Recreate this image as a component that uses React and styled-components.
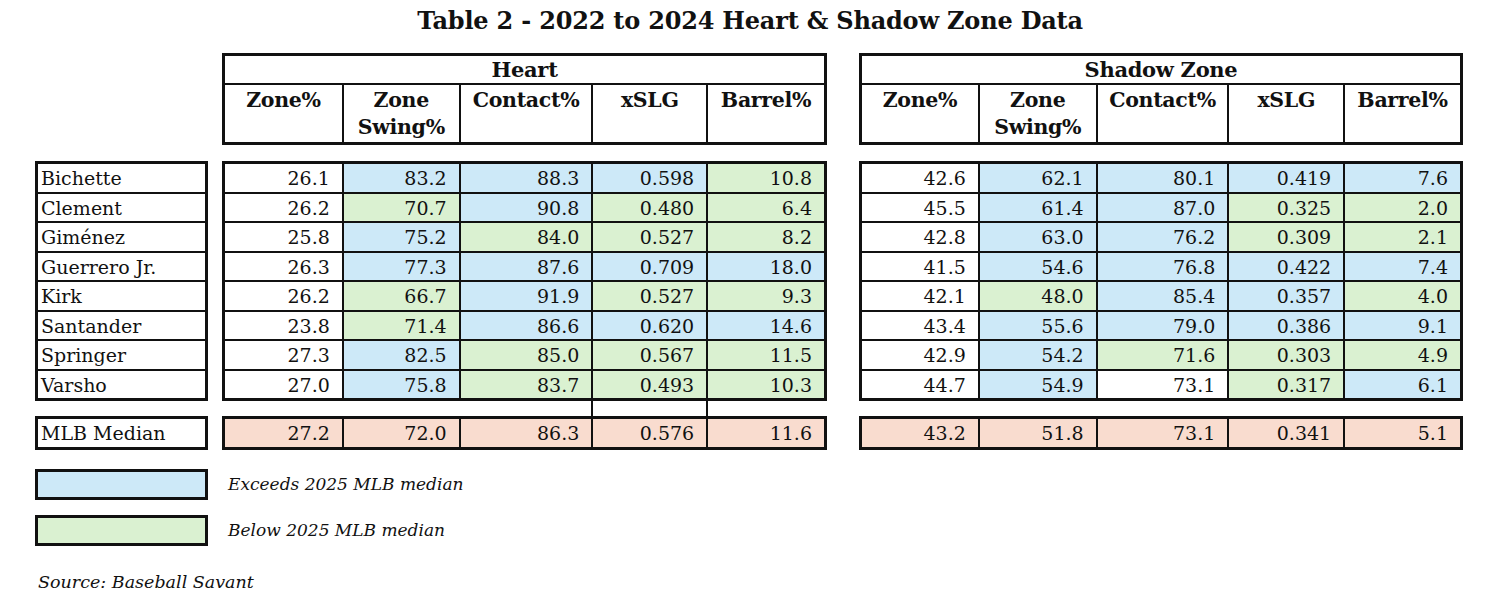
import React from "react";
import styled, { createGlobalStyle } from "styled-components";

const Global = createGlobalStyle`
  html, body { margin: 0; padding: 0; background: #fff; }
  body { font-family: "DejaVu Serif", "Liberation Serif", serif; color: #111; }
`;

const FILL = { W: "#ffffff", B: "#cde9f8", G: "#daf1d1", P: "#f9dccf" };

const Page = styled.div`
  width: 1500px;
  height: 605px;
  box-sizing: border-box;
  padding: 4px 0 0 35px;
  position: relative;
`;

const Title = styled.h1`
  margin: 0 0 0 -35px;
  width: 1500px;
  text-align: center;
  font-size: 24px;
  line-height: 34px;
  font-weight: bold;
  letter-spacing: -0.2px;
`;

const Main = styled.div`
  display: flex;
  align-items: flex-start;
  margin-top: 15px;
`;

const NameColumn = styled.div`
  width: 173px;
  margin-top: 108px;
  margin-right: 14px;
  display: flex;
  flex-direction: column;
`;

const Block = styled.div`
  width: ${(p) => p.$w}px;
  margin-right: ${(p) => p.$mr || 0}px;
  display: flex;
  flex-direction: column;
`;

const Grid = styled.div`
  display: grid;
  grid-template-columns: ${(p) => p.$cols};
  box-sizing: border-box;
  width: 100%;
  border: 3px solid #111;
  margin-top: ${(p) => p.$mt || 0}px;
`;

const GroupHead = styled.div`
  grid-column: 1 / -1;
  height: 27px;
  line-height: 27px;
  text-align: center;
  font-weight: bold;
  font-size: 21px;
  letter-spacing: -0.3px;
  border-bottom: 2px solid #111;
`;

const ColHead = styled.div`
  height: 57px;
  padding-top: 2px;
  box-sizing: border-box;
  text-align: center;
  font-weight: bold;
  font-size: 20.5px;
  line-height: 27px;
  letter-spacing: -0.3px;
  white-space: nowrap;
  border-left: ${(p) => (p.$first ? "none" : "2px solid #111")};
`;

const Cell = styled.div`
  height: 27.5px;
  line-height: 29px;
  font-size: 19px;
  text-align: right;
  padding-right: 12px;
  background: ${(p) => FILL[p.$fill] || "#fff"};
  border-left: ${(p) => (p.$first ? "none" : "2px solid #111")};
  border-top: ${(p) => (p.$top ? "none" : "2px solid #111")};
  overflow: hidden;
  white-space: nowrap;
`;

const NameCell = styled.div`
  height: 27.5px;
  line-height: 29px;
  font-size: 19px;
  padding-left: 3px;
  border-top: ${(p) => (p.$top ? "none" : "2px solid #111")};
  white-space: nowrap;
`;

const NameBox = styled.div`
  border: 3px solid #111;
  margin-top: ${(p) => p.$mt || 0}px;
`;

const GapRow = styled.div`
  display: grid;
  grid-template-columns: ${(p) => p.$cols};
  height: 15px;
  padding: 0 3px;
`;

const GapCell = styled.div`
  border-left: ${(p) => (p.$line ? "2px solid #111" : "none")};
`;

const Legend = styled.div`
  margin-top: 19px;
  display: flex;
  flex-direction: column;
  gap: 15px;
`;

const LegendRow = styled.div`
  display: flex;
  align-items: center;
  gap: 20px;
`;

const Swatch = styled.div`
  width: 173px;
  height: 31px;
  box-sizing: border-box;
  border: 3px solid #111;
  background: ${(p) => FILL[p.$fill]};
`;

const Note = styled.span`
  font-style: italic;
  font-size: 17px;
`;

const Source = styled.div`
  margin-top: 26px;
  margin-left: 3px;
  font-style: italic;
  font-size: 17.5px;
`;

const HEADS = [["Zone%"], ["Zone", "Swing%"], ["Contact%"], ["xSLG"], ["Barrel%"]];

const players = [
  "Bichette",
  "Clement",
  "Giménez",
  "Guerrero Jr.",
  "Kirk",
  "Santander",
  "Springer",
  "Varsho",
];

const heart = [
  [["26.1", "W"], ["83.2", "B"], ["88.3", "B"], ["0.598", "B"], ["10.8", "G"]],
  [["26.2", "W"], ["70.7", "G"], ["90.8", "B"], ["0.480", "G"], ["6.4", "G"]],
  [["25.8", "W"], ["75.2", "B"], ["84.0", "G"], ["0.527", "G"], ["8.2", "G"]],
  [["26.3", "W"], ["77.3", "B"], ["87.6", "B"], ["0.709", "B"], ["18.0", "B"]],
  [["26.2", "W"], ["66.7", "G"], ["91.9", "B"], ["0.527", "G"], ["9.3", "G"]],
  [["23.8", "W"], ["71.4", "G"], ["86.6", "B"], ["0.620", "B"], ["14.6", "B"]],
  [["27.3", "W"], ["82.5", "B"], ["85.0", "G"], ["0.567", "G"], ["11.5", "G"]],
  [["27.0", "W"], ["75.8", "B"], ["83.7", "G"], ["0.493", "G"], ["10.3", "G"]],
];
const heartMedian = ["27.2", "72.0", "86.3", "0.576", "11.6"];

const shadow = [
  [["42.6", "W"], ["62.1", "B"], ["80.1", "B"], ["0.419", "B"], ["7.6", "B"]],
  [["45.5", "W"], ["61.4", "B"], ["87.0", "B"], ["0.325", "G"], ["2.0", "G"]],
  [["42.8", "W"], ["63.0", "B"], ["76.2", "B"], ["0.309", "G"], ["2.1", "G"]],
  [["41.5", "W"], ["54.6", "B"], ["76.8", "B"], ["0.422", "B"], ["7.4", "B"]],
  [["42.1", "W"], ["48.0", "G"], ["85.4", "B"], ["0.357", "B"], ["4.0", "G"]],
  [["43.4", "W"], ["55.6", "B"], ["79.0", "B"], ["0.386", "B"], ["9.1", "B"]],
  [["42.9", "W"], ["54.2", "B"], ["71.6", "G"], ["0.303", "G"], ["4.9", "G"]],
  [["44.7", "W"], ["54.9", "B"], ["73.1", "W"], ["0.317", "G"], ["6.1", "B"]],
];
const shadowMedian = ["43.2", "51.8", "73.1", "0.341", "5.1"];

function ZoneBlock({ title, cols, width, mr, rows, median, gapLines }) {
  return (
    <Block $w={width} $mr={mr}>
      <Grid $cols={cols}>
        <GroupHead>{title}</GroupHead>
        {HEADS.map((h, i) => (
          <ColHead key={i} $first={i === 0}>
            {h.map((line) => (
              <div key={line}>{line}</div>
            ))}
          </ColHead>
        ))}
      </Grid>
      <Grid $cols={cols} $mt={16}>
        {rows.map((r, ri) =>
          r.map(([v, f], ci) => (
            <Cell key={`${ri}-${ci}`} $fill={f} $first={ci === 0} $top={ri === 0}>
              {v}
            </Cell>
          ))
        )}
      </Grid>
      <GapRow $cols={cols}>
        {median.map((_, i) => (
          <GapCell key={i} $line={gapLines.includes(i)} />
        ))}
      </GapRow>
      <Grid $cols={cols}>
        {median.map((v, i) => (
          <Cell key={i} $fill="P" $first={i === 0} $top>
            {v}
          </Cell>
        ))}
      </Grid>
    </Block>
  );
}

export default function App() {
  return (
    <Page>
      <Global />
      <Title>Table 2 - 2022 to 2024 Heart &amp; Shadow Zone Data</Title>
      <Main>
        <NameColumn>
          <NameBox>
            {players.map((p, i) => (
              <NameCell key={p} $top={i === 0}>
                {p}
              </NameCell>
            ))}
          </NameBox>
          <NameBox $mt={15}>
            <NameCell $top>MLB Median</NameCell>
          </NameBox>
        </NameColumn>
        <ZoneBlock
          title="Heart"
          cols="118fr 118fr 134fr 116fr 119fr"
          width={605}
          mr={32}
          rows={heart}
          median={heartMedian}
          gapLines={[3, 4]}
        />
        <ZoneBlock
          title="Shadow Zone"
          cols="117fr 119fr 133fr 117fr 118fr"
          width={604}
          rows={shadow}
          median={shadowMedian}
          gapLines={[]}
        />
      </Main>
      <Legend>
        <LegendRow>
          <Swatch $fill="B" />
          <Note>Exceeds 2025 MLB median</Note>
        </LegendRow>
        <LegendRow>
          <Swatch $fill="G" />
          <Note>Below 2025 MLB median</Note>
        </LegendRow>
      </Legend>
      <Source>Source: Baseball Savant</Source>
    </Page>
  );
}
